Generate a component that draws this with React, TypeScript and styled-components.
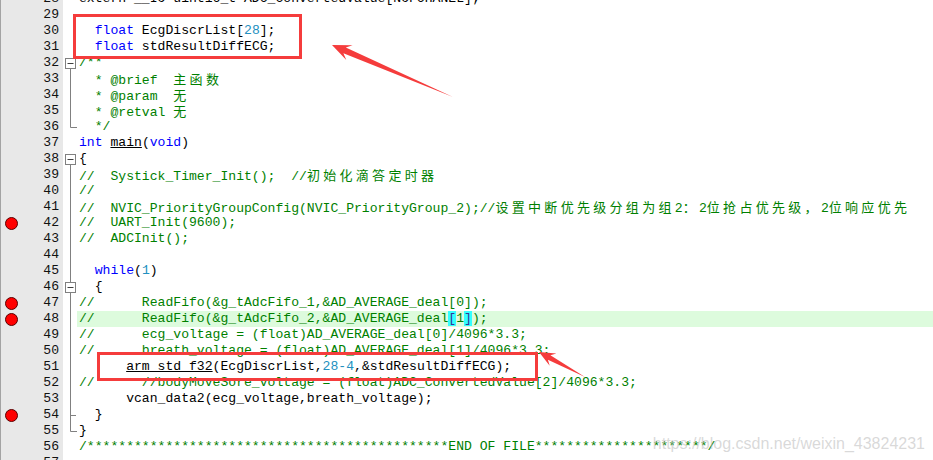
import React from "react";
import styled, { createGlobalStyle } from "styled-components";

const GlobalStyle = createGlobalStyle`
  html, body {
    margin: 0;
    padding: 0;
    background: #fff;
    overflow: hidden;
  }
`;

const Page = styled.div`
  position: relative;
  width: 933px;
  height: 460px;
  overflow: hidden;
  background: #fff;
`;

const Editor = styled.div`
  margin-top: -9px;
  font-family: "Liberation Mono", "Courier New", monospace;
  font-size: 13.1px;
`;

const Row = styled.div`
  display: grid;
  grid-template-columns: 63px 14px 1fr;
  height: 16px;
  line-height: 16px;
`;

const Gutter = styled.div`
  display: flex;
  align-items: center;
  justify-content: space-between;
  background: #e8e8e8;
  border-left: 1px solid #a3a3a3;
  padding-right: 4px;
  color: #111;
`;

const Breakpoint = styled.span<{ $on: boolean }>`
  width: 11px;
  height: 11px;
  margin-left: 4px;
  border-radius: 50%;
  background: ${(p) => (p.$on ? "#ff0000" : "transparent")};
  border: 1px solid ${(p) => (p.$on ? "#5a0000" : "transparent")};
`;

const FoldCell = styled.div`
  background: #fff;
  svg {
    display: block;
  }
`;

const Code = styled.div<{ $hl: boolean }>`
  padding-left: 2px;
  white-space: pre;
  overflow: hidden;
  color: #000;
  background: ${(p) => (p.$hl ? "#ddfbdd" : "transparent")};
`;

type Kind = "t" | "k" | "n" | "c" | "u" | "h" | "b";

const Tok = styled.span<{ $k: Kind }>`
  color: ${(p) =>
    p.$k === "k"
      ? "#0000ff"
      : p.$k === "n"
      ? "#2290c0"
      : p.$k === "c" || p.$k === "h"
      ? "#008000"
      : p.$k === "b"
      ? "#333399"
      : "#000"};
  text-decoration: ${(p) => (p.$k === "u" ? "underline" : "none")};
  background: ${(p) => (p.$k === "b" ? "#33ffff" : "transparent")};
  font-family: ${(p) =>
    p.$k === "h" ? `"Noto Sans CJK SC", sans-serif` : "inherit"};
  letter-spacing: ${(p) => (p.$k === "h" ? "3.3px" : "normal")};
  font-size: ${(p) => (p.$k === "h" ? "13px" : "inherit")};
`;

const RedBox = styled.div<{ $x: number; $y: number; $w: number; $h: number }>`
  position: absolute;
  left: ${(p) => p.$x}px;
  top: ${(p) => p.$y}px;
  width: ${(p) => p.$w}px;
  height: ${(p) => p.$h}px;
  box-sizing: border-box;
  border: 3px solid #f53c3c;
`;

const Overlay = styled.svg`
  position: absolute;
  left: 0;
  top: 0;
  pointer-events: none;
`;

const Watermark = styled.div`
  position: absolute;
  right: 8px;
  bottom: 7px;
  font-family: "Liberation Sans", Arial, sans-serif;
  font-size: 16px;
  color: rgba(185, 185, 185, 0.55);
`;

type Fold = "" | "box" | "boxIn" | "line" | "tick" | "end";

const FoldMark = ({ kind }: { kind: Fold }) => (
  <svg width="14" height="16" viewBox="0 0 14 16">
    {kind === "line" || kind === "tick" ? (
      <line x1="7.5" y1="0" x2="7.5" y2="16" stroke="#808080" />
    ) : null}
    {kind === "end" ? (
      <polyline points="7.5,0 7.5,8.5 14,8.5" fill="none" stroke="#808080" />
    ) : null}
    {kind === "tick" ? (
      <line x1="7.5" y1="8.5" x2="13" y2="8.5" stroke="#808080" />
    ) : null}
    {kind === "box" || kind === "boxIn" ? (
      <>
        {kind === "boxIn" ? (
          <line x1="7.5" y1="0" x2="7.5" y2="3.5" stroke="#808080" />
        ) : null}
        <line x1="7.5" y1="12.5" x2="7.5" y2="16" stroke="#808080" />
        <rect x="2.5" y="3.5" width="10" height="10" fill="#fff" stroke="#808080" />
        <line x1="4.5" y1="8.5" x2="10.5" y2="8.5" stroke="#404040" />
      </>
    ) : null}
  </svg>
);

type Pt = [number, number];

const arrowPoints = (tail: Pt, tip: Pt, head: number, hw: number, sw: number) => {
  const dx = tip[0] - tail[0];
  const dy = tip[1] - tail[1];
  const len = Math.hypot(dx, dy);
  const ux = dx / len;
  const uy = dy / len;
  const nx = -uy;
  const ny = ux;
  const bx = tip[0] - ux * head;
  const by = tip[1] - uy * head;
  const kx = tip[0] - ux * head * 0.72;
  const ky = tip[1] - uy * head * 0.72;
  const pts: Pt[] = [
    tail,
    [kx + nx * sw, ky + ny * sw],
    [bx + nx * hw, by + ny * hw],
    tip,
    [bx - nx * hw, by - ny * hw],
    [kx - nx * sw, ky - ny * sw],
  ];
  return pts.map((p) => p.map((v) => v.toFixed(1)).join(",")).join(" ");
};

type Line = { toks: [Kind, string][]; fold?: Fold; bp?: boolean; hl?: boolean };

const lines: Line[] = [
  { toks: [["t", "extern __IO uint16_t ADC_ConvertedValue[NOFCHANEL];"]] },
  { toks: [] },
  { toks: [["t", "  "], ["k", "float"], ["t", " EcgDiscrList["], ["n", "28"], ["t", "];"]] },
  { toks: [["t", "  "], ["k", "float"], ["t", " stdResultDiffECG;"]] },
  { toks: [["c", "/**"]], fold: "box" },
  { toks: [["c", "  * @brief  "], ["h", "主函数"]], fold: "line" },
  { toks: [["c", "  * @param  "], ["h", "无"]], fold: "line" },
  { toks: [["c", "  * @retval "], ["h", "无"]], fold: "line" },
  { toks: [["c", "  */"]], fold: "end" },
  { toks: [["k", "int"], ["t", " "], ["u", "main"], ["t", "("], ["k", "void"], ["t", ")"]] },
  { toks: [["t", "{"]], fold: "box" },
  { toks: [["c", "//  Systick_Timer_Init();  //"], ["h", "初始化滴答定时器"]], fold: "line" },
  { toks: [["c", "//"]], fold: "line" },
  {
    toks: [
      ["c", "//  NVIC_PriorityGroupConfig(NVIC_PriorityGroup_2);//"],
      ["h", "设置中断优先级分组为组"],
      ["c", "2"],
      ["h", "："],
      ["c", "2"],
      ["h", "位抢占优先级，"],
      ["c", "2"],
      ["h", "位响应优先"],
    ],
    fold: "line",
  },
  { toks: [["c", "//  UART_Init(9600);"]], fold: "line", bp: true },
  { toks: [["c", "//  ADCInit();"]], fold: "line" },
  { toks: [], fold: "line" },
  { toks: [["t", "  "], ["k", "while"], ["t", "("], ["n", "1"], ["t", ")"]], fold: "line" },
  { toks: [["t", "  {"]], fold: "boxIn" },
  { toks: [["c", "//      ReadFifo(&g_tAdcFifo_1,&AD_AVERAGE_deal[0]);"]], fold: "line", bp: true },
  {
    toks: [
      ["c", "//      ReadFifo(&g_tAdcFifo_2,&AD_AVERAGE_deal"],
      ["b", "["],
      ["c", "1"],
      ["b", "]"],
      ["c", ");"],
    ],
    fold: "line",
    bp: true,
    hl: true,
  },
  { toks: [["c", "//      ecg_voltage = (float)AD_AVERAGE_deal[0]/4096*3.3;"]], fold: "line" },
  { toks: [["c", "//      breath_voltage = (float)AD_AVERAGE_deal[1]/4096*3.3;"]], fold: "line" },
  {
    toks: [
      ["t", "      "],
      ["u", "arm_std_f32"],
      ["t", "(EcgDiscrList,"],
      ["n", "28-4"],
      ["t", ",&stdResultDiffECG);"],
    ],
    fold: "line",
  },
  { toks: [["c", "//      //bodyMoveSore_voltage = (float)ADC_ConvertedValue[2]/4096*3.3;"]], fold: "line" },
  { toks: [["t", "      vcan_data2(ecg_voltage,breath_voltage);"]], fold: "line" },
  { toks: [["t", "  }"]], fold: "tick", bp: true },
  { toks: [["t", "}"]], fold: "end" },
  { toks: [["c", "/" + "*".repeat(46) + "END OF FILE" + "*".repeat(22) + "/"]] },
  { toks: [] },
];

const App = () => {
  return (
    <Page>
      <GlobalStyle />
      <Editor>
        {lines.map((ln, i) => (
          <Row key={i}>
            <Gutter>
              <Breakpoint $on={!!ln.bp} />
              <span>{28 + i}</span>
            </Gutter>
            <FoldCell>
              <FoldMark kind={ln.fold || ""} />
            </FoldCell>
            <Code $hl={!!ln.hl}>
              {ln.toks.map(([k, s], j) => (
                <Tok key={j} $k={k}>
                  {s}
                </Tok>
              ))}
            </Code>
          </Row>
        ))}
      </Editor>

      <RedBox $x={73} $y={14} $w={229} $h={45} />
      <RedBox $x={97} $y={352} $w={441} $h={29} />

      <Overlay width="933" height="460" viewBox="0 0 933 460">
        <polygon points={arrowPoints([453, 97], [332, 45], 19, 8, 3)} fill="#f53c3c" />
        <polygon points={arrowPoints([585, 377], [539, 352], 16, 7, 2.6)} fill="#f53c3c" />
      </Overlay>

      <Watermark>https://blog.csdn.net/weixin_43824231</Watermark>
    </Page>
  );
};

export default App;
